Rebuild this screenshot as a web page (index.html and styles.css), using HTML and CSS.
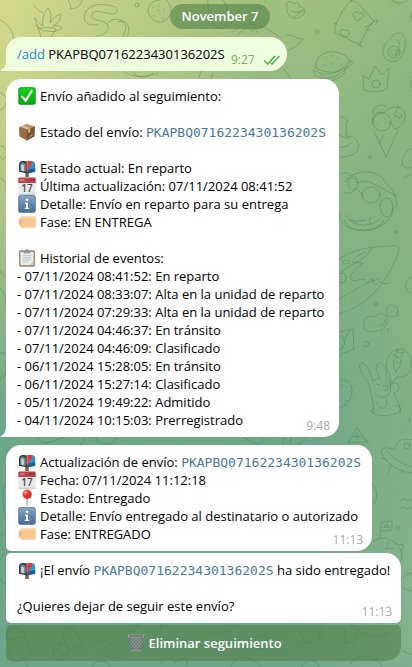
FILE: index.html
```html
<!DOCTYPE html>
<html lang="es">
<head>
<meta charset="utf-8">
<meta name="viewport" content="width=device-width, initial-scale=1">
<title>Seguimiento de envíos</title>
<link rel="stylesheet" href="styles.css">
</head>
<body>
<svg class="defs" aria-hidden="true">
  <defs>
    <linearGradient id="g-check" x2="0" y2="1"><stop stop-color="#12d31b"/><stop offset="1" stop-color="#04a808"/></linearGradient>
    <linearGradient id="g-info" x2="0" y2="1"><stop stop-color="#83a6c8"/><stop offset="1" stop-color="#456d98"/></linearGradient>
    <linearGradient id="g-pin" x2="1" y2="1"><stop stop-color="#ff6a5d"/><stop offset="1" stop-color="#c91316"/></linearGradient>
  </defs>
  <symbol id="i-check" viewBox="0 0 18 18">
    <rect x=".3" y=".3" width="17.4" height="17.4" rx="2.5" fill="#0a8c18"/>
    <rect x="1" y="1" width="16" height="16" rx="2" fill="url(#g-check)"/>
    <path d="M4.2 9.6l3.5 4.2L13.6 4" fill="none" stroke="#fff" stroke-width="2.2" stroke-linecap="round" stroke-linejoin="round"/>
  </symbol>
  <symbol id="i-box" viewBox="0 0 18 18">
    <path d="M1 4.2L8.7.8 17 3.4 9 7z" fill="#c69468"/>
    <path d="M1 4.2L9 7v10.6L1.4 13.6z" fill="#9c6b43"/>
    <path d="M9 7l8-3.6-.5 10L9 17.6z" fill="#7f5131"/>
    <path d="M4.6 2.6l7.600 2.900V9l-2 .9V6.500L2.800 3.500z" fill="#dfc0a0"/>
    <path d="M11.500 13.500l3-1.500" stroke="#e7d0b5" stroke-width=".7"/>
    <path d="M1 4.200L9 7l8-3.600M9 7v10.500" stroke="#6d452b" stroke-width=".5" fill="none"/>
  </symbol>
  <symbol id="i-mail" viewBox="0 0 18 18">
    <path d="M7.300 13h3.500v5H7.300z" fill="#8b5b38"/>
    <path d="M4.500 2h9c2.400 0 3.700 1.500 3.700 4v6.800l-7.700 1.700V7z" fill="#348fca"/>
    <path d="M9.500 10.500l7.700-1.200v3.500l-7.700 1.700z" fill="#1c5f97"/>
    <path d="M1 5.500C1 3.200 2.600 2 4.800 2s4.700 1.500 4.700 4v8.500L1 12.800z" fill="#27394a"/>
    <path d="M2.300 6c0-1.700.9-2.500 2.300-2.500S7.800 4.600 7.800 6.500v6.300l-5.500-1z" fill="#6f8797"/>
    <path d="M3.300 5.500l2.500.8v6l-2.500-.5z" fill="#d5dce1"/>
    <path d="M8.700 2h5v4h-2.900v5.500H8.700z" fill="#e63125"/>
    <path d="M8.700 2h1v9.500h-1z" fill="#ff7765"/>
  </symbol>
  <symbol id="i-cal" viewBox="0 0 18 18">
    <rect x=".3" y=".5" width="17.400" height="17.200" rx="1.300" fill="#e8e9ea"/>
    <path d="M.3 6V1.800Q.3.500 1.600.500h14.800q1.300 0 1.300 1.300V6z" fill="#b8434b"/>
    <path d="M2 4.400L3.300 2l1 2 1.200-2 .7 2.400" stroke="#e3a0a2" stroke-width=".7" fill="none"/>
    <circle cx="12.500" cy="2.800" r=".8" fill="#742830"/><circle cx="15.500" cy="2.800" r=".8" fill="#742830"/>
    <path d="M.5 17.200h17" stroke="#bbbfc2"/>
  </symbol>
  <symbol id="i-info" viewBox="0 0 18 18">
    <rect x=".3" y=".3" width="17.400" height="17.400" rx="2.500" fill="#45668b"/>
    <rect x="1" y="1" width="16" height="16" rx="2" fill="url(#g-info)"/>
    <circle cx="9" cy="5" r="1.300" fill="#fff"/>
    <path d="M7 7.800h3v5h1.200V14H6.800v-1.200H8V9H7z" fill="#fff"/>
  </symbol>
  <symbol id="i-tag" viewBox="0 0 18 18">
    <path d="M3.600 3.300h13.100q1 0 1 1v9.400q0 1-1 1H3.600L.5 11.500v-5z" fill="#f6c792"/>
    <path d="M3.600 3.300h13.100q1 0 1 1v1H2z" fill="#fbd8ad"/>
    <circle cx="2.800" cy="9" r="1.100" fill="#fff" stroke="#9c7850" stroke-width=".6"/>
  </symbol>
  <symbol id="i-clip" viewBox="0 0 18 18">
    <rect x="1" y="1.200" width="16" height="16.500" rx="1.300" fill="#a88b70"/>
    <path d="M2.500 3h13v13h-13z" fill="#edeeed"/>
    <path d="M11.500 16h4v-4z" fill="#c5c9ca"/>
    <path d="M5.500 1.600h2q.2-1.400 1.500-1.400t1.500 1.400h2v2.600h-7z" fill="#8d969d"/>
    <path d="M4.500 6.700h9M4.500 8.800h9M4.500 10.900h9M4.500 13h6" stroke="#b4b9bb" stroke-width=".8"/>
  </symbol>
  <symbol id="i-pin" viewBox="0 0 18 18">
    <path d="M8.400 9h1.400l-.3 7.500-.4 1-.4-1z" fill="#939ca3"/>
    <circle cx="9.100" cy="5.200" r="4.700" fill="url(#g-pin)"/>
    <ellipse cx="7.500" cy="3.400" rx="1.500" ry="1" fill="#ffb0a5"/>
  </symbol>
  <symbol id="i-bin" viewBox="0 0 18 18">
    <path d="M1.500 2.500h15l-2 14q-.2 1-1.200 1H4.700q-1 0-1.200-1z" fill="#6f7976"/>
    <path d="M3 5l10 12M5 4l9 10M8 4l7 7M11 4l4.500 4M3.500 9l7 8M15 5L5 17M13 4L4 14M10 4l-7 7M7 4L3 8M14.500 9l-7 8" stroke="#a3aba8" stroke-width=".5"/>
    <rect x="1" y=".8" width="16" height="2.800" rx="1.200" fill="#a3aaa8"/>
    <path d="M2.200 2h13.600" stroke="#4b5453" stroke-width="1"/>
    <path d="M4 16.800h10" stroke="#a5adab" stroke-width=".8"/>
  </symbol>
</svg>

<svg class="doodles" viewBox="0 0 412 667" preserveAspectRatio="xMinYMin slice" aria-hidden="true">
  <g>
    <path d="M0 20c10 5 14 13 14 24M68 0c2 4 4 6 2 9 7 0 11-4 12-9M36 25c4 4 4 10 5 14M43 13c-5-3-8-5-9-8M35 18c4 4 4 6 8 8-1-6 0-12 5-18 3 4 4 9 2 15 4-6 9-9 11-9 0 7-5 10-8 12 4-1 8 0 9 2-5 4-11 4-15 3-6 0-10-3-12-13zM38 29c5-2 12-2 18 0l-6 10M98 24c-10 4-18-4-11-14 6-7 17-6 25-4 7 1 7 7 1 8-8 0-18-6-21 0-2 7 7 5 14 9 6 5-2 14-9 12l1 3M108 23c8-9 21-1 17 8l-2 6M118 22c8-4 14 5 9 15"/>
    <path d="M148 12c0-8 5-12 12-12M148 12c2 9 13 14 20 6 6-8 3-14-2-18M153 7v1M159 5v1M164 9v1M154 15v1M160 13v1M163 18v1M158 10v1M208 0c-1 12 3 25 13 29 9-2 9-18 2-29M123 71c9 8 24 6 35 2M133 71c2 8 14 8 20 2M199 78l2-7M211 78l3-7M233 32c7-9 18-9 26-6 10 3 16 8 22 12M237 35l9-7 7 3 1-4 4 6M286 51c9-3 14-7 17-12-7 0-10-5-17-4M284 69l7 10"/>
    <circle cx="137" cy="5" r="2"/><circle cx="317" cy="32" r="2"/><circle cx="370" cy="157" r="1.500"/>
    <path d="M286 5c1-4 5-5 8-1 3-3 6-1 5 3 6-1 7 5 3 9-7 5-16 2-15-10M290 10q5 5 14 0M294 17q4-1 8-7"/>
    <path d="M342 12c4-6 7-10 10-11 7 0 12 11 22 20-6 4-9 13-14 23-9-2-15-8-25-11-1-8 4-15 7-21zM334 23l3 1M352 1l-2-1 3-1M374 21l4-1-2 4M360 44l2 3-4-2M357 21c-5-5-4-9-1-9s3 1 4 2c2-3 6 0 3 3zM347 37c-7-1-8-5-6-7 2-1 4 0 4 1 3-3 7 1 2 6M372 24l-7 3M370 29l-3 1"/>
    <path d="M391 0q9 7 18-1M412 12q-4 4 0 8M395 34c7-4 12 4 10 12-1 11-8 18-16 15-10-5-6-15-1-20zM397 40c5 2 1 10-1 16"/><circle cx="394" cy="52" r="6"/><path d="M391 54q3 3 6-1M391 50v1M396 50v1"/>
    <path d="M316 68c-2-13 12-19 23-15 8 2 11 6 10 12-8 8-20 10-33 3zM314 70c11 8 24 5 37-10 3 4-1 7-6 9 2 9-18 13-22 14M314 70c-2 5 4 7 8 8 8 1 17-2 23-8M326 57v1M332 55v1M338 58v1M324 65v1M332 63v1M341 64v1"/>
    <path d="M363 76l1 14q12 4 23-1l2-21-7 7-7-9-6 13zM412 79q-4 5 0 10"/><circle cx="376" cy="84" r="4"/>
    <path d="M372 124c-1-9 7-14 12-11 7-9 22-8 21 4-1 7-5 10-10 12-2-3-4-7-7-6M374 131l12 26 12-27M379 143l5-8"/><circle cx="382" cy="122" r="9"/><path d="M373 114c0-10 8-10 13-8M398 105c2 5-6 8-3 12q3-3 4 2 3-1 3-5M377 124l1 1M384 118l1 1"/>
    <path d="M339 118c3-3 9 1 9 3-3-1-1 5-2 15 14 0 17 13 6 19l-13 3M339 135q8 4 10 3M339 148q8-1 12-5M412 148c-6 2-8 7-10 14 1 6 6 8 10 4M404 178l8-5"/>
    <path d="M339 175c4-4 10-2 11 1 16-8 31-3 35 6 3 4 8 6 9 12 5 7 2 15-1 14-1 15-16 22-32 22-12 0-23-6-21-18M345 182c2-6 11-6 12 1 5-3 14-1 19 2 8 5 13 7 20 11M343 192c5 3 11 1 13-4 2 3 5 3 7 9M380 205c1-8 10-9 12-3 2 11-2 15-6 15-5-2-5-7-6-12M346 215c3 7 11 7 20 5M370 218v6"/><ellipse cx="353" cy="183" rx="5" ry="7"/><ellipse cx="371" cy="195" rx="9" ry="8"/>
    <path d="M339 313c22-4 38-21 46-34 7-11 12-20 14-29 0-4-3-5-8-4-21 0-38 4-52 13M339 274c8-7 18-12 27-18 2-3 4-5 6-8M366 252c-8 3-12 6-13 9s4 1 10 2c-8 7-14 12-12 16s8 0 14 0c1 5 3 5 7-1 2 7 4 9 8 3 3 3 5 3 9 2M339 299c12-7 25-15 41-21"/><ellipse cx="346" cy="262" rx="3" ry="2"/><ellipse cx="342" cy="278" rx="4" ry="5"/><circle cx="396" cy="232" r="1.500"/><circle cx="376" cy="304" r="1.500"/><circle cx="366" cy="344" r="2.500"/><path d="M344 220c4 14 34 15 40 0M349 220q15 11 30 0M412 276c-8 3-9 15 0 19"/>
    <path d="M387 317c-4-5-11-4-11 0-5-1-9-2-11 2-5 13 5 14 11 12 11-1 13-10 10-15M397 312l2 3-3 1M380 326q5-1 5-6M382 331v2M388 329v3"/><circle cx="392" cy="311" r="6"/><path d="M339 332l14-3 1 20-15 6M339 338c7-5 8 11 0 12M350 330l-6 10M339 380c17-4 18 23 0 28M341 384l2 2M346 386v1M350 391v1M345 400l3 1"/>
    <path d="M373 381c-3-12-9-19-12-18-4 2 1 12 8 21 1 11 6 18 4 29 6 4 18 3 27-1 1-8-5-14-6-19 7-2 6-10 1-10-3 0-5 2-5 4M373 381q4-3 7-3c-6-8-4-16 0-15 6 2 7 9 6 14 7 6 6 18-1 20-6 1-9-2-10-4M377 402c0 10 14 7 9-2M377 384l3 1M385 381l2 2M383 386q4 1 5-1 0 7-4 5M372 413c-2-3 1-7 3-3M400 411c2-4-3-8-4-4"/><path d="M389 373c-6-9-1-22 10-24 12-1 16 18 8 26-4 3-9 2-11 2l-4 6z"/><path d="M396 372c-4-7-3-14 2-15 5 2 3 9-2 15M398 357l-5-2 4-1 0-4 3 3 4-1-3 4M397 362l2 1"/>
    <path d="M357 428l-9 15M357 428l11 14M348 443l20-1M353 437l9-1M357 433v7M362 438l4 3M412 414q-5 6-2 9M38 438c5 10 17 2 30-2M82 436q4 6-2 9"/><ellipse cx="106" cy="438" rx="10" ry="6"/><path d="M242 437l18 8 5-8M282 445l3-8M290 445l1-8M298 445l8-8"/>
    <path d="M412 440c-12-3-16 2-17 10-10-4-16-2-13 5 7 11 18 17 30 18M388 452q8 10 24 15M386 459l-5-1M391 464l-3 9M402 470v4"/><circle cx="407" cy="446" r="3"/><path d="M401 500c4-4 5 3 9 0l2-1M401 508c4-3 5 3 9 0M373 484q8 12 0 21M380 538l1-16 11-1v9l-10 1"/><circle cx="398" cy="528" r="2"/><path d="M384 527l3-3 2 3z"/>
    <path d="M373 542c10-9 25-1 28 9M389 541l-3 8 8-1M395 544l9 1-3 7q3 9-2 10M412 573c-15 1-15 18 0 18M401 616c-2 22-38 26-50 8M346 628l-2 15 10-1 4-7M403 651l9 4"/>
    <path d="M6 633c4-6 12-8 18-1l7 21c-7 8-14 10-20 7zM23 655l6 15M7 638l8 2 4-4 6 2M12 646v3M19 644v3M62 632l10-5 12 18-16 5zM93 646c8-8 14-6 19 0 9-9 28-16 27-27M95 648c6 13 33 12 44 0 14-2 29-14 20-27q-3-7-8-3M92 668c1-9 17-9 20 0"/><circle cx="61" cy="652" r="8"/><path d="M54 650q5 1 6-6M61 660q0-7 7-6M210 633c13 4 22-5 26-8M300 632c2 10 14 18 20 4v-10M300 646l12-5M161 664c3-9 12-8 14-1 6-8 16-3 11 4M230 668c6-15 21-14 32 0M301 667c6-9 16-8 18 0M350 665c9-16 28-8 32 2"/><circle cx="261" cy="642" r="7"/><path d="M257 641v1M264 641v1M258 645q3 2 6-1M260 635l3-4 3 5"/>
    <path d="M6 484q-6 11 0 35M0 535h6M0 580c5 1 4 5 6 5M0 270q4 8 6 6M0 288q7 5 6 20M0 353h6M0 380q8-5 6-18M0 145q9 3 6 12-3 4-6 0M0 177q9 6 6 14M0 110c4-1 6-3 6-7M0 92l6 5"/>
  </g>
</svg>

<main class="chat">
  <time class="date" datetime="2024-11-07">November 7</time>

  <article class="bubble tail out">
    <p class="line"><span><a class="cmd" href="#add">/add</a> PKAPBQ0716223430136202S</span></p>
    <span class="time">9:27
      <svg class="ticks" viewBox="0 0 18 10" aria-label="Leído"><path d="M1 5.500l4 3.500 7-8M8 8l1 1 7.500-8"/></svg>
    </span>
    <svg class="tail-shape" viewBox="0 0 14 14" aria-hidden="true"><path d="M6 0v4q0 7-5.500 9.200Q0 14 1 14h13V0z"/></svg>
  </article>

  <article class="bubble tail report">
    <p class="line"><svg class="emoji"><use href="#i-check"/></svg><span>Envío añadido al seguimiento:</span></p>
    <p class="line gap"><svg class="emoji"><use href="#i-box"/></svg><span>Estado del envío: <code>PKAPBQ0716223430136202S</code></span></p>
    <p class="line gap"><svg class="emoji"><use href="#i-mail"/></svg><span>Estado actual: En reparto</span></p>
    <p class="line"><svg class="emoji" viewBox="0 0 18 18"><use href="#i-cal"/><text x="9" y="15" text-anchor="middle" class="cal-day">17</text></svg><span>Última actualización: 07/11/2024 08:41:52</span></p>
    <p class="line"><svg class="emoji"><use href="#i-info"/></svg><span>Detalle: Envío en reparto para su entrega</span></p>
    <p class="line"><svg class="emoji"><use href="#i-tag"/></svg><span>Fase: EN ENTREGA</span></p>
    <p class="line gap"><svg class="emoji"><use href="#i-clip"/></svg><span>Historial de eventos:</span></p>
    <p class="line">- 07/11/2024 08:41:52: En reparto</p>
    <p class="line">- 07/11/2024 08:33:07: Alta en la unidad de reparto</p>
    <p class="line">- 07/11/2024 07:29:33: Alta en la unidad de reparto</p>
    <p class="line">- 07/11/2024 04:46:37: En tránsito</p>
    <p class="line">- 07/11/2024 04:46:09: Clasificado</p>
    <p class="line">- 06/11/2024 15:28:05: En tránsito</p>
    <p class="line">- 06/11/2024 15:27:14: Clasificado</p>
    <p class="line">- 05/11/2024 19:49:22: Admitido</p>
    <p class="line">- 04/11/2024 10:15:03: Prerregistrado</p>
    <span class="time">9:48</span>
    <svg class="tail-shape" viewBox="0 0 14 14" aria-hidden="true"><path d="M6 0v4q0 7-5.500 9.200Q0 14 1 14h13V0z"/></svg>
  </article>

  <div class="group">
    <article class="bubble first">
      <p class="line"><svg class="emoji"><use href="#i-mail"/></svg><span>Actualización de envío: <code>PKAPBQ0716223430136202S</code></span></p>
      <p class="line"><svg class="emoji" viewBox="0 0 18 18"><use href="#i-cal"/><text x="9" y="15" text-anchor="middle" class="cal-day">17</text></svg><span>Fecha: 07/11/2024 11:12:18</span></p>
      <p class="line"><svg class="emoji"><use href="#i-pin"/></svg><span>Estado: Entregado</span></p>
      <p class="line"><svg class="emoji"><use href="#i-info"/></svg><span>Detalle: Envío entregado al destinatario o autorizado</span></p>
      <p class="line"><svg class="emoji"><use href="#i-tag"/></svg><span>Fase: ENTREGADO</span></p>
      <span class="time">11:13</span>
    </article>
    <div class="with-action">
      <article class="bubble last">
        <p class="line"><svg class="emoji"><use href="#i-mail"/></svg><span>¡El envío <code>PKAPBQ0716223430136202S</code> ha sido entregado!</span></p>
        <p class="line gap">¿Quieres dejar de seguir este envío?</p>
        <span class="time">11:13</span>
      </article>
      <button class="action" type="button"><svg class="emoji"><use href="#i-bin"/></svg>Eliminar seguimiento</button>
    </div>
  </div>
</main>
</body>
</html>
```
FILE: styles.css
```css
* {
  box-sizing: border-box;
}

body {
  margin: 0;
  position: relative;
  min-height: 100vh;
  overflow-x: hidden;
  font: 13px/18px "Open Sans", "Noto Sans", sans-serif;
  color: #000;
  background:
    radial-gradient(ellipse 65% 60% at 0% 0%, #d5d88a 0%, rgba(213, 216, 138, 0) 100%),
    radial-gradient(ellipse 30% 70% at 104% 35%, #88b581 0%, rgba(136, 181, 129, 0) 100%),
    radial-gradient(ellipse 35% 40% at 104% 90%, #86b391 0%, rgba(134, 179, 145, 0) 100%),
    linear-gradient(180deg, #9fc07e 0%, #8cb584 24%, #74a889 55%, #6ba587 72%, #6da688 100%);
}

.defs {
  position: absolute;
  width: 0;
  height: 0;
}

.cal-day {
  font: 600 10px "Open Sans", sans-serif;
  fill: #45494d;
}

.doodles {
  position: absolute;
  inset: 0;
  width: 100%;
  height: 100%;
  fill: none;
  stroke: #3e7c4c;
  stroke-opacity: 0.4;
  stroke-width: 1;
  stroke-linecap: round;
  stroke-linejoin: round;
}

.chat {
  position: relative;
  display: flex;
  flex-direction: column;
  align-items: flex-start;
  gap: 8px;
  padding: 4px 6px 6px;
}

.date {
  align-self: center;
  padding: 3px 12px 4px;
  margin-left: 28px;
  border-radius: 13px;
  background: rgba(82, 129, 73, 0.6);
  color: #fff;
  font-weight: 600;
}

.bubble {
  position: relative;
  padding: 8px 11px;
  border-radius: 15px;
  background: #fff;
  white-space: nowrap;
}

.line {
  display: flex;
  gap: 4px;
  margin: 0;
}

.gap {
  margin-top: 18px;
}

.emoji {
  width: 18px;
  height: 18px;
  margin-left: 1px;
  flex: none;
}

code {
  font: 13px/16px "DejaVu Sans Mono", monospace;
  color: #4a789f;
}

.time {
  position: absolute;
  right: 9px;
  bottom: 2px;
  display: flex;
  align-items: center;
  gap: 9px;
  font-size: 12px;
  color: #a0acb6;
}

.out {
  display: flex;
  padding-right: 62px;
  background: #effddf;
}

.out .time {
  right: 6px;
  gap: 8px;
  color: #6cb566;
}

.report {
  padding-right: 13px;
}

.cmd {
  color: #168acd;
  text-decoration: none;
}

.ticks {
  width: 18px;
  height: 10px;
  fill: none;
  stroke: #4fae4e;
  stroke-width: 1.5;
}

.tail {
  border-bottom-left-radius: 0;
}

.tail-shape {
  position: absolute;
  left: -6px;
  bottom: 0;
  width: 14px;
  height: 14px;
  fill: #fff;
}

.out .tail-shape {
  fill: #effddf;
}

.date + .out {
  border-radius: 15px 17px 17px 0;
}

.group {
  display: flex;
  flex-direction: column;
  align-items: flex-start;
  gap: 2px;
}

.with-action {
  display: grid;
  gap: 2px;
}

.first {
  border-bottom-left-radius: 5px;
}

.last {
  border-radius: 5px 15px 5px 5px;
}

.action {
  display: flex;
  align-items: center;
  justify-content: center;
  gap: 4px;
  height: 36px;
  padding: 0 11px;
  border: 0;
  border-radius: 5px 5px 15px 5px;
  background: rgba(82, 129, 73, 0.6);
  color: #fff;
  font: inherit;
  font-weight: 600;
  cursor: pointer;
}
```
